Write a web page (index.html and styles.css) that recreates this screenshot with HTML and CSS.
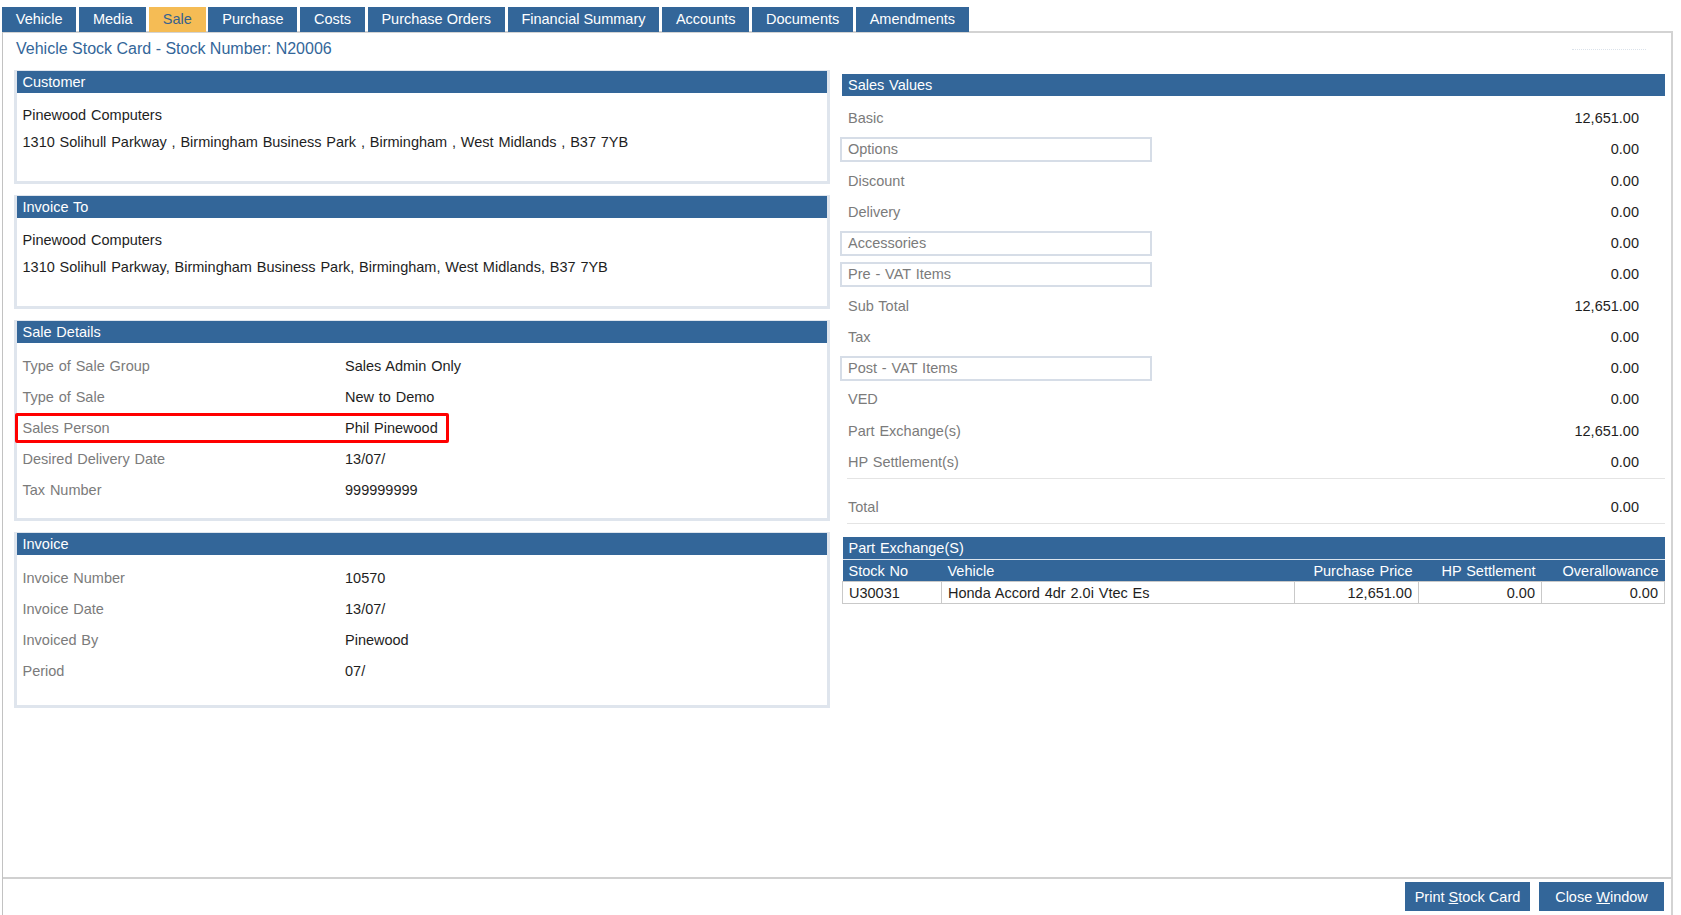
FILE: index.html
```html
<!DOCTYPE html>
<html lang="en">
<head>
    <meta charset="UTF-8">
    <title>Vehicle Stock Card - N20006</title>
    <link rel="stylesheet" href="styles.css">
</head>
<body>
    <div class="tabs">
        <div class="tab">Vehicle</div>
        <div class="tab">Media</div>
        <div class="tab active">Sale</div>
        <div class="tab">Purchase</div>
        <div class="tab">Costs</div>
        <div class="tab">Purchase Orders</div>
        <div class="tab">Financial Summary</div>
        <div class="tab">Accounts</div>
        <div class="tab">Documents</div>
        <div class="tab">Amendments</div>
    </div>

    <div class="frame">
        <div class="title-row">
            <h1>Vehicle Stock Card - Stock Number: N20006</h1>
            <span class="faint"></span>
        </div>

        <div class="columns">
            <div class="col-left">
                <div class="panel">
                    <div class="panel-head">Customer</div>
                    <div class="address">
                        <div>Pinewood Computers</div>
                        <div>1310 Solihull Parkway , Birmingham Business Park , Birmingham , West Midlands , B37 7YB</div>
                    </div>
                </div>

                <div class="panel">
                    <div class="panel-head">Invoice To</div>
                    <div class="address">
                        <div>Pinewood Computers</div>
                        <div>1310 Solihull Parkway, Birmingham Business Park, Birmingham, West Midlands, B37 7YB</div>
                    </div>
                </div>

                <div class="panel">
                    <div class="panel-head">Sale Details</div>
                    <div class="details">
                        <div class="drow"><span class="lbl">Type of Sale Group</span><span>Sales Admin Only</span></div>
                        <div class="drow"><span class="lbl">Type of Sale</span><span>New to Demo</span></div>
                        <div class="drow marked"><span class="lbl">Sales Person</span><span>Phil Pinewood</span></div>
                        <div class="drow"><span class="lbl">Desired Delivery Date</span><span>13/07/</span></div>
                        <div class="drow"><span class="lbl">Tax Number</span><span>999999999</span></div>
                    </div>
                </div>

                <div class="panel">
                    <div class="panel-head">Invoice</div>
                    <div class="details details-invoice">
                        <div class="drow"><span class="lbl">Invoice Number</span><span>10570</span></div>
                        <div class="drow"><span class="lbl">Invoice Date</span><span>13/07/</span></div>
                        <div class="drow"><span class="lbl">Invoiced By</span><span>Pinewood</span></div>
                        <div class="drow"><span class="lbl">Period</span><span>07/</span></div>
                    </div>
                </div>
            </div>

            <div class="col-right">
                <div class="panel-head sv-head">Sales Values</div>
                <div class="sv-body">
                    <div class="sv-row"><span class="lbl">Basic</span><span class="v">12,651.00</span></div>
                    <div class="sv-row"><span class="lbl box">Options</span><span class="v">0.00</span></div>
                    <div class="sv-row"><span class="lbl">Discount</span><span class="v">0.00</span></div>
                    <div class="sv-row"><span class="lbl">Delivery</span><span class="v">0.00</span></div>
                    <div class="sv-row"><span class="lbl box">Accessories</span><span class="v">0.00</span></div>
                    <div class="sv-row"><span class="lbl box">Pre - VAT Items</span><span class="v">0.00</span></div>
                    <div class="sv-row"><span class="lbl">Sub Total</span><span class="v">12,651.00</span></div>
                    <div class="sv-row"><span class="lbl">Tax</span><span class="v">0.00</span></div>
                    <div class="sv-row"><span class="lbl box">Post - VAT Items</span><span class="v">0.00</span></div>
                    <div class="sv-row"><span class="lbl">VED</span><span class="v">0.00</span></div>
                    <div class="sv-row"><span class="lbl">Part Exchange(s)</span><span class="v">12,651.00</span></div>
                    <div class="sv-row"><span class="lbl">HP Settlement(s)</span><span class="v">0.00</span></div>
                    <div class="sv-row total"><span class="lbl">Total</span><span class="v">0.00</span></div>
                </div>

                <table class="px-table">
                    <tr><th class="px-title" colspan="5">Part Exchange(S)</th></tr>
                    <tr class="px-cols">
                        <th class="c-stock">Stock No</th>
                        <th class="c-vehicle">Vehicle</th>
                        <th class="num c-price">Purchase Price</th>
                        <th class="num c-hp">HP Settlement</th>
                        <th class="num">Overallowance</th>
                    </tr>
                    <tr class="px-data">
                        <td>U30031</td>
                        <td>Honda Accord 4dr 2.0i Vtec Es</td>
                        <td class="num">12,651.00</td>
                        <td class="num">0.00</td>
                        <td class="num">0.00</td>
                    </tr>
                </table>
            </div>
        </div>

        <div class="footer">
            <button class="btn">Print <u>S</u>tock Card</button>
            <button class="btn">Close <u>W</u>indow</button>
        </div>
    </div>
</body>
</html>
```

FILE: styles.css
```css
*, *::before, *::after {
    box-sizing: border-box;
}
body {
    margin: 0;
    height: 915px;
    overflow: hidden;
    display: flex;
    flex-direction: column;
    font-family: "Liberation Sans", Arial, sans-serif;
    font-size: 14.5px;
    word-spacing: 0.8px;
    color: #1e1e1e;
    background-color: #fff;
}
.tabs {
    display: flex;
    padding: 7px 0 0 2px;
    margin-bottom: -1px;
    position: relative;
    z-index: 1;
}
.tab {
    height: 25px;
    line-height: 25px;
    padding: 0 13.8px;
    margin-right: 2.8px;
    background-color: #336699;
    color: #fff;
    word-spacing: 0;
}
.tab.active {
    background-color: #f5bc55;
    color: #37628e;
}
.frame {
    flex: 1;
    display: flex;
    flex-direction: column;
    width: 1671px;
    margin-left: 2px;
    border: 2px solid #d3d3d3;
    border-left: 1px solid #c2c2c2;
    border-bottom: none;
}
.title-row {
    display: flex;
    justify-content: space-between;
    align-items: center;
    padding: 6px 0 0 13px;
}
h1 {
    margin: 0;
    font-size: 16px;
    line-height: 20px;
    font-weight: normal;
    color: #336699;
    word-spacing: 0;
}
.faint {
    width: 74px;
    margin-right: 25px;
    border-top: 1px dotted #dbe2ea;
}
.columns {
    flex: 1;
    display: flex;
    gap: 12px;
    margin-top: 11px;
    padding: 0 6px 0 11px;
}
.col-left {
    width: 816px;
}
.col-right {
    flex: 1;
    padding-top: 4px;
}
.panel {
    border: 3px solid #dfe5ed;
    border-top-width: 1px;
    margin-bottom: 11px;
}
.panel-head {
    height: 22px;
    line-height: 22px;
    padding-left: 5.5px;
    background-color: #336699;
    color: #fff;
}
.address {
    padding: 9px 0 26px 5.5px;
    line-height: 26.5px;
}
.details {
    padding: 7px 0 13px 5.5px;
}
.details-invoice {
    padding-bottom: 19px;
}
.drow {
    display: grid;
    grid-template-columns: 322.5px 1fr;
    align-items: center;
    height: 31px;
}
.lbl {
    color: #7b7b7b;
}
.drow.marked {
    position: relative;
}
.drow.marked::after {
    content: "";
    position: absolute;
    left: -7.5px;
    top: 1px;
    width: 434px;
    height: 30px;
    border: 3px solid #ff0000;
    border-radius: 2px;
}
.sv-head {
    padding-left: 6px;
}
.sv-body {
    padding-top: 6.5px;
}
.sv-row {
    display: flex;
    align-items: center;
    height: 31.25px;
    padding: 0 26px 0 6px;
}
.sv-row .v {
    margin-left: auto;
}
.sv-row .box {
    width: 312px;
    height: 25px;
    line-height: 21px;
    margin-left: -8px;
    padding-left: 6px;
    border: 2px solid #d6dde7;
}
.sv-row.total {
    height: 46px;
    margin-left: 5px;
    padding: 12px 26px 0 1px;
    border-top: 1px solid #e4e4e4;
    border-bottom: 1px solid #e4e4e4;
}
.px-table {
    width: 100%;
    margin-top: 13px;
    border-collapse: collapse;
}
.px-table th,
.px-table td {
    padding: 0 6px;
    font-weight: normal;
    text-align: left;
    white-space: nowrap;
}
.px-table .num {
    text-align: right;
}
.px-title {
    height: 23px;
    background-color: #336699;
    color: #fff;
}
.px-cols th {
    height: 22px;
    background-color: #336699;
    color: #fff;
    border-top: 1px solid #dbe4ee;
}
.px-data td {
    height: 22px;
    border: 1px solid #c9c9c9;
}
.c-stock {
    width: 99px;
}
.c-vehicle {
    width: 353px;
}
.c-price {
    width: 124px;
}
.c-hp {
    width: 123px;
}
.footer {
    display: flex;
    justify-content: flex-end;
    gap: 9px;
    padding: 3px 7px 4px 0;
    border-top: 2px solid #d0d0d0;
}
.btn {
    width: 125px;
    height: 29px;
    border: none;
    background-color: #336699;
    color: #fff;
    font-family: inherit;
    font-size: 14.5px;
    cursor: pointer;
}
```
